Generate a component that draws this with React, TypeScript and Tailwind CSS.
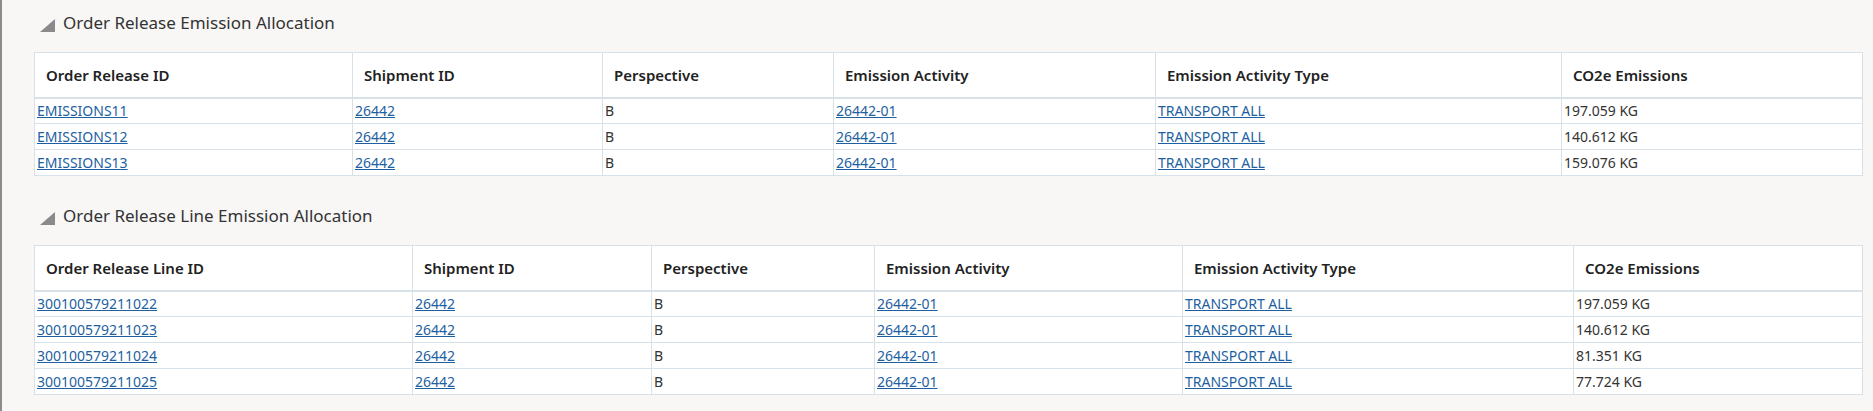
import React from "react";

const F = { fontFamily: '"Noto Sans", "Open Sans", sans-serif' };

type Cell = { t: string; link?: boolean };

function Section({ title, cols, widths, rows, mt }: { title: string; cols: string[]; widths: number[]; rows: Cell[][]; mt: string }) {
  return (
    <div className={mt}>
      <div className="flex items-center h-[24px] pl-[38px]">
        <svg width="15" height="13" viewBox="0 0 15 13" className="mr-[8px] mt-[4px]"><polygon points="15,0 15,13 0,13" fill="#8a8a8a" /></svg>
        <span className="text-[17px] text-[#333]">{title}</span>
      </div>
      <table className="ml-[32px] mt-[17px] bg-white border-collapse table-fixed w-[1828px] border border-[#d9e1e8]">
        <colgroup>{widths.map((w, i) => <col key={i} style={{ width: w }} />)}</colgroup>
        <thead>
          <tr className="h-[45px]">
            {cols.map((c) => (
              <th key={c} className="text-left font-semibold text-[15px] text-[#222] pl-[11px] border border-[#d9e1e8] border-b-2">{c}</th>
            ))}
          </tr>
        </thead>
        <tbody>
          {rows.map((r, i) => (
            <tr key={i} className="h-[26px]">
              {r.map((c, j) => (
                <td key={j} className="pl-[2px] text-[14px] border border-[#d9e1e8] leading-none">
                  {c.link ? <a className="text-[#1d5fa0] underline">{c.t}</a> : <span className="text-[#333]">{c.t}</span>}
                </td>
              ))}
            </tr>
          ))}
        </tbody>
      </table>
    </div>
  );
}

export default function App() {
  const r1 = [["EMISSIONS11", "197.059 KG"], ["EMISSIONS12", "140.612 KG"], ["EMISSIONS13", "159.076 KG"]];
  const r2 = [["300100579211022", "197.059 KG"], ["300100579211023", "140.612 KG"], ["300100579211024", "81.351 KG"], ["300100579211025", "77.724 KG"]];
  const mk = (a: string[][]) => a.map(([id, e]) => [
    { t: id, link: true }, { t: "26442", link: true }, { t: "B" }, { t: "26442-01", link: true }, { t: "TRANSPORT ALL", link: true }, { t: e },
  ]);
  return (
    <div style={F} className="w-[1873px] h-[411px] bg-[#f8f7f6] border-l-2 border-[#8c8c8c] pt-[11px] overflow-hidden">
      <Section title="Order Release Emission Allocation" mt=""
        cols={["Order Release ID", "Shipment ID", "Perspective", "Emission Activity", "Emission Activity Type", "CO2e Emissions"]}
        widths={[318, 250, 231, 322, 406, 301]} rows={mk(r1)} />
      <Section title="Order Release Line Emission Allocation" mt="mt-[28px]"
        cols={["Order Release Line ID", "Shipment ID", "Perspective", "Emission Activity", "Emission Activity Type", "CO2e Emissions"]}
        widths={[378, 239, 223, 308, 391, 289]} rows={mk(r2)} />
    </div>
  );
}
